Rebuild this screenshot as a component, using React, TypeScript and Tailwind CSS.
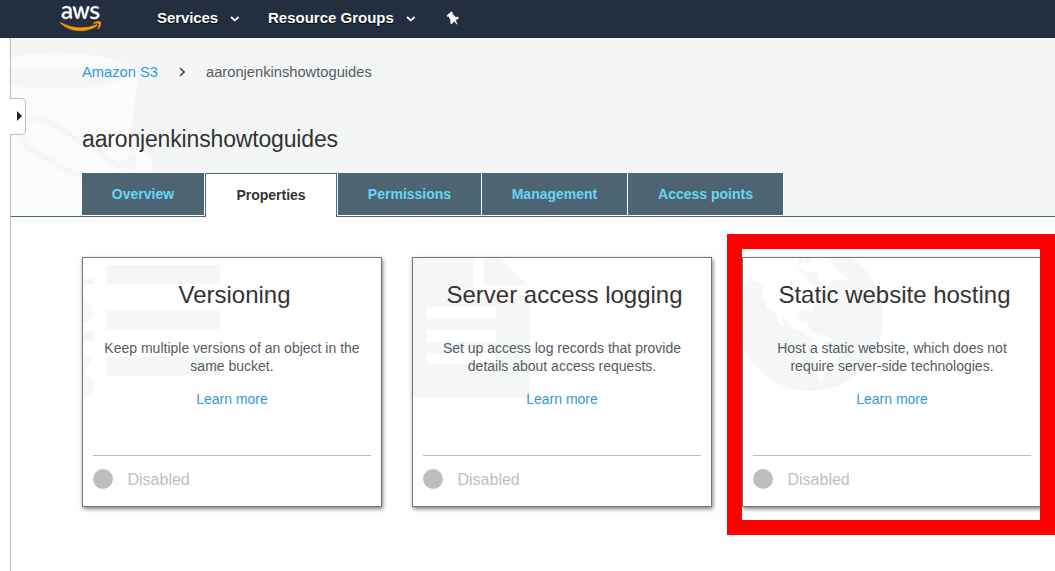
import type { ReactNode } from "react";
import { FaAws } from "react-icons/fa";

const TABS = [
  { label: "Overview", width: "w-[122px]" },
  { label: "Properties", width: "w-[132px]", active: true },
  { label: "Permissions", width: "w-[143px]" },
  { label: "Management", width: "w-[145px]" },
  { label: "Access points", width: "w-[155px]" },
];

function Caret() {
  return (
    <svg width="10" height="6" viewBox="0 0 10 6" className="mt-px">
      <path d="M1 1l3.800 3.400L8.600 1" fill="none" stroke="#fff" strokeWidth="1.7" />
    </svg>
  );
}

function PinIcon() {
  return (
    <svg width="14" height="14" viewBox="0 0 14 14">
      <path
        d="M0.800 4.600 5.200 0.600 6.700 1.300 6.500 2.800 9.400 5.700 12.400 6.100 12.700 7.600 9.800 9.300 11.400 13.200 10.900 13.400 8.300 10.500 5.600 13.100 4.400 12.600 4.500 9 2.600 5.600 1.200 5.800z"
        fill="#fff"
      />
    </svg>
  );
}

function TopBar() {
  return (
    <header className="flex h-[38px] items-start bg-[#232f3e] pl-[60px] text-[15px] font-bold leading-[18px] text-white [text-shadow:0_1px_1px_#000]">
      <svg width="0" height="0" className="absolute">
        <linearGradient id="logo" x1="0" y1="0" x2="0" y2="1">
          <stop offset="0.61" stopColor="#fff" />
          <stop offset="0.61" stopColor="#f90" />
        </linearGradient>
      </svg>
      <FaAws className="mt-[1.500px] h-[33px] w-[41px]" stroke="url(#logo)" strokeWidth="7" style={{ fill: "url(#logo)" }} />
      <div className="ml-[56px] mt-[9px] flex items-center">
        <span className="w-[73px] tracking-[-0.1px]">Services</span>
        <Caret />
      </div>
      <div className="ml-[28px] mt-[9px] flex items-center">
        <span className="w-[138px]">Resource Groups</span>
        <Caret />
      </div>
      <div className="ml-[30px] mt-[11px]">
        <PinIcon />
      </div>
    </header>
  );
}

function BucketArt() {
  return (
    <svg width="160" height="178" className="absolute left-0 top-0">
      <g transform="translate(-3 -2) scale(.33333)">
        <path
          d="M0 70C50 53 100 50 165 52C270 54 360 76 388 112C389 125 387 140 385 155L362 352Q392 330 418 355Q436 380 430 415V545H0z"
          fill="#fafcfb"
        />
        <path d="M0 101C80 90 200 91 260 97C310 103 340 112 340 124C340 136 290 150 230 154C150 160 60 158 0 148z" fill="#f5f7f7" />
        <path
          d="M222 422C170 400 110 366 72 342C48 328 38 312 42 292C48 262 72 240 100 248C118 253 140 266 160 280L340 392Q362 404 380 388"
          fill="none"
          stroke="#f5f7f7"
          strokeWidth="17"
        />
        <path d="M366 350Q390 362 388 386Q380 404 350 404L340 385z" fill="#f5f7f7" />
      </g>
    </svg>
  );
}

function BucketHeader() {
  return (
    <section className="relative h-[179px] border-b border-[#4d6572] bg-[#f4f6f6] pl-[71px] pt-[22px]">
      <BucketArt />
      <nav className="relative flex h-6 items-center text-[14.7px]">
        <a className="w-[97px] text-[#3199d8]">Amazon S3</a>
        <svg width="6" height="10" viewBox="0 0 6 10" className="mr-[21px]">
          <path d="M1 1l4 4-4 4" fill="none" stroke="#444" strokeWidth="1.6" />
        </svg>
        <span className="text-[14.7px] text-[#545b64]">aaronjenkinshowtoguides</span>
      </nav>
      <h1 className="relative mt-[40px] h-[30px] text-[23px] leading-[30px] tracking-[-0.16px] text-[#333]">
        aaronjenkinshowtoguides
      </h1>
      <div className="relative mt-[19px] flex h-[43px] items-start gap-px text-center text-sm font-bold">
        {TABS.map((t) =>
          t.active ? (
            <div key={t.label} className={`${t.width} h-[44px] border-x border-t border-[#4d6572] bg-white leading-[43px] text-[#333]`}>
              {t.label}
            </div>
          ) : (
            <div key={t.label} className={`${t.width} h-[42px] bg-[#4d6572] leading-[42px] text-[#67d5f6] shadow-[1px_1px_0_#fff]`}>
              {t.label}
            </div>
          ),
        )}
      </div>
    </section>
  );
}

function ListArt() {
  return (
    <g fill="#f5f7f7">
      <rect x="23" y="7" width="114" height="19" rx="1.5" />
      <rect x="23" y="52.5" width="114" height="19" rx="1.5" />
      <rect x="23" y="98.500" width="114" height="19" rx="1.5" />
      <rect x="0" y="21" width="11" height="5" />
      <path d="M0 42C7 44 9.500 49 9.500 54C9.500 60 5 64 0 65z" />
      <path d="M0 76H2V73H11V83H0z" />
      <path d="M0 99H9L3 112L0 115z" />
      <path d="M0 114L2 117C8 119 10.500 123 10.500 128C10.500 134 6 139 0 139z" />
    </g>
  );
}

function FileArt() {
  return (
    <>
      <path d="M0 0H88L113 27L117 38V138Q117 140 115 140H0z" fill="#f5f7f7" />
      <path d="M60 0H71V27H118V38H60z" fill="#fff" />
      <g fill="#fff">
        <rect x="14" y="49" width="69" height="12" rx="2" />
        <rect x="14" y="72" width="69" height="12" rx="2" />
        <rect x="14" y="95" width="69" height="11" rx="2" />
      </g>
    </>
  );
}

function GlobeArt() {
  return (
    <g transform="translate(-3 -8) scale(.33333)">
      <circle cx="211" cy="204" r="219" fill="#f5f7f7" />
      <g fill="#fff">
        <path d="M21 77L58 24H178L172 45L180 66L196 76L205 85L198 93L232 108L245 124L250 135L238 140L230 158L218 170L212 190L205 180L182 182L176 197L180 213L190 220L198 212L207 214L204 228L210 240L222 243L232 254L250 258L268 262L272 270L262 276L238 272L225 276L208 260L192 250L176 242L160 236L148 222L134 204L120 194L124 210L132 226L126 228L112 206L104 186L84 176L74 156L66 134L70 112L56 98L38 92L40 84L22 84z" />
        <path d="M176 45L190 34L204 42L215 24H258L268 34L284 48L296 66L314 74L324 88L308 94L290 88L276 94L262 106L246 96L230 92L238 78L228 64L205 67L190 62L178 58z" />
        <path d="M214 276L232 270L252 280L274 292L296 304L300 318L280 340L262 352L254 380L240 400L232 380L228 340L216 310z" />
      </g>
    </g>
  );
}

function Card({ title, lines, art }: { title: string; lines: string[]; art: ReactNode }) {
  return (
    <article className="relative flex h-[250px] w-[300px] shrink-0 flex-col border border-[#777] bg-white px-[10px] shadow-[1px_2px_4px_rgba(0,0,0,0.5)]">
      <svg width="298" height="248" className="absolute left-0 top-0">
        {art}
      </svg>
      <h2 className="relative mt-[22px] h-[30px] pl-[5px] text-center text-2xl leading-[30px] text-[#333]">{title}</h2>
      <p className="relative mt-[29px] text-center text-sm leading-[18px] text-[#545b64]">
        {lines[0]}
        <br />
        {lines[1]}
      </p>
      <a className="relative mt-[15px] text-center text-sm leading-[18px] text-[#3199d8]">Learn more</a>
      <div className="relative mt-[47px] flex h-[47px] items-center border-t border-[#bdbfbf] text-base text-[#bdbfbf]">
        <span className="size-5 rounded-full bg-[#bdbfbf]" />
        <span className="pl-[14.500px] pt-[2px]">Disabled</span>
      </div>
    </article>
  );
}

export default function App() {
  return (
    <div className="relative flex h-[571px] w-[1055px] flex-col overflow-hidden bg-white font-['Liberation_Sans',Arial,sans-serif]">
      <TopBar />
      <div className="flex flex-1">
        <aside className="relative w-[11px] shrink-0 border-r border-[#bbb]">
          <button className="absolute left-[10px] top-[60px] z-10 flex h-[37px] w-4 items-center rounded-r-[5px] border border-l-0 border-[#bbb] bg-white pb-px pl-[7px]">
            <svg width="5" height="10" viewBox="0 0 5 10">
              <path d="M0 0l5 5-5 5z" fill="#222" />
            </svg>
          </button>
        </aside>
        <main className="min-w-0 flex-1">
          <BucketHeader />
          <div className="flex gap-[30px] pl-[71px] pt-10">
            <Card title="Versioning" lines={["Keep multiple versions of an object in the", "same bucket."]} art={<ListArt />} />
            <Card
              title="Server access logging"
              lines={["Set up access log records that provide", "details about access requests."]}
              art={<FileArt />}
            />
            <Card
              title="Static website hosting"
              lines={["Host a static website, which does not", "require server-side technologies."]}
              art={<GlobeArt />}
            />
          </div>
        </main>
      </div>
      <div className="absolute left-[727px] top-[234px] h-[301px] w-[328px] border-[15px] border-[#f00]" />
    </div>
  );
}
